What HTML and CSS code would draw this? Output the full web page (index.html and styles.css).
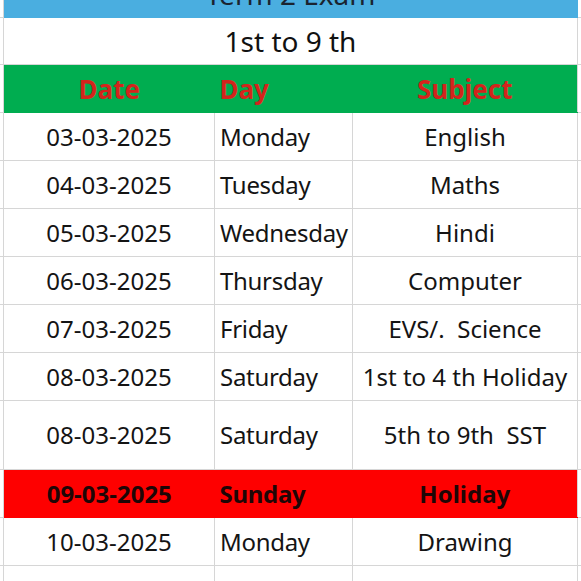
FILE: index.html
```html
<!DOCTYPE html>
<html>
<head>
<meta charset="utf-8">
<link rel="stylesheet" href="styles.css">
</head>
<body>
<div class="sheet">
<table class="grid">
  <colgroup>
    <col class="c-edge"><col class="c-date"><col class="c-day"><col class="c-sub"><col class="c-right">
  </colgroup>
  <tr class="r-title1">
    <td class="edge"></td><td colspan="3" class="blue">Term 2 Exam</td><td class="edge"></td>
  </tr>
  <tr class="r-title2">
    <td class="edge"></td><td colspan="3" class="title2">1st to 9 th</td><td class="edge"></td>
  </tr>
  <tr class="r-head">
    <td class="edge"></td><td class="head center">Date</td><td class="head left">Day</td><td class="head center">Subject</td><td class="edge"></td>
  </tr>
  <tr><td class="edge"></td><td class="center">03-03-2025</td><td class="left">Monday</td><td class="center">English</td><td class="edge"></td></tr>
  <tr><td class="edge"></td><td class="center">04-03-2025</td><td class="left">Tuesday</td><td class="center">Maths</td><td class="edge"></td></tr>
  <tr><td class="edge"></td><td class="center">05-03-2025</td><td class="left">Wednesday</td><td class="center">Hindi</td><td class="edge"></td></tr>
  <tr><td class="edge"></td><td class="center">06-03-2025</td><td class="left">Thursday</td><td class="center">Computer</td><td class="edge"></td></tr>
  <tr><td class="edge"></td><td class="center">07-03-2025</td><td class="left">Friday</td><td class="center">EVS/.&nbsp; Science</td><td class="edge"></td></tr>
  <tr><td class="edge"></td><td class="center">08-03-2025</td><td class="left">Saturday</td><td class="center">1st to 4 th Holiday</td><td class="edge"></td></tr>
  <tr class="r-tall"><td class="edge"></td><td class="center">08-03-2025</td><td class="left">Saturday</td><td class="center">5th to 9th&nbsp; SST</td><td class="edge"></td></tr>
  <tr class="r-holiday"><td class="edge"></td><td class="hol center">09-03-2025</td><td class="hol left">Sunday</td><td class="hol center">Holiday</td><td class="edge"></td></tr>
  <tr><td class="edge"></td><td class="center">10-03-2025</td><td class="left">Monday</td><td class="center">Drawing</td><td class="edge"></td></tr>
  <tr class="r-faint"><td class="edge"></td><td class="center">11-03-2025</td><td class="left">Tuesday</td><td class="center">Sanskrit</td><td class="edge"></td></tr>
</table>
</div>
</body>
</html>
```

FILE: styles.css
```css
html, body {
  margin: 0;
  padding: 0;
  background: #ffffff;
}

.sheet {
  width: 581px;
  height: 581px;
  overflow: hidden;
}

.grid {
  border-collapse: collapse;
  table-layout: fixed;
  width: 586px;
  margin-top: -31px;
  margin-left: -1px;
  font-family: "Noto Sans", "Open Sans", sans-serif;
  font-size: 24px;
  color: #141414;
}

.c-edge { width: 4px; }
.c-date { width: 211px; }
.c-day { width: 138px; }
.c-sub { width: 225px; }
.c-right { width: 8px; }

.grid td {
  border: 1px solid #d6d6d6;
  height: 47px;
  padding: 0;
  white-space: nowrap;
  overflow: hidden;
  vertical-align: middle;
  line-height: 1;
}

.grid tr.r-tall td { height: 68px; }
.grid tr.r-title2 td { height: 46px; }

.center { text-align: center; }
.left {
  text-align: left;
  padding-left: 5px !important;
  letter-spacing: -0.3px;
}

.blue {
  background: #4aaee0;
  text-align: center;
  font-size: 28px;
  color: #1a2430;
  border-color: #4aaee0 !important;
}

.title2 {
  text-align: center;
  font-size: 28px;
  color: #111111;
  border-left: 1px solid #d6d6d6;
  border-right: 1px solid #d6d6d6;
}

.grid tr.r-head td.head {
  background: #00ad50;
  color: #d3241c;
  font-weight: 700;
  font-size: 26px;
  letter-spacing: 0;
  border-color: #00ad50;
  border-left: none;
  border-right: none;
}

.grid tr.r-holiday td.hol {
  background: #fe0000;
  color: #1e0606;
  font-weight: 700;
  border-color: #fe0000;
  border-left: none;
  border-right: none;
}

.grid tr.r-faint td { color: #dcdcdc; }
```
